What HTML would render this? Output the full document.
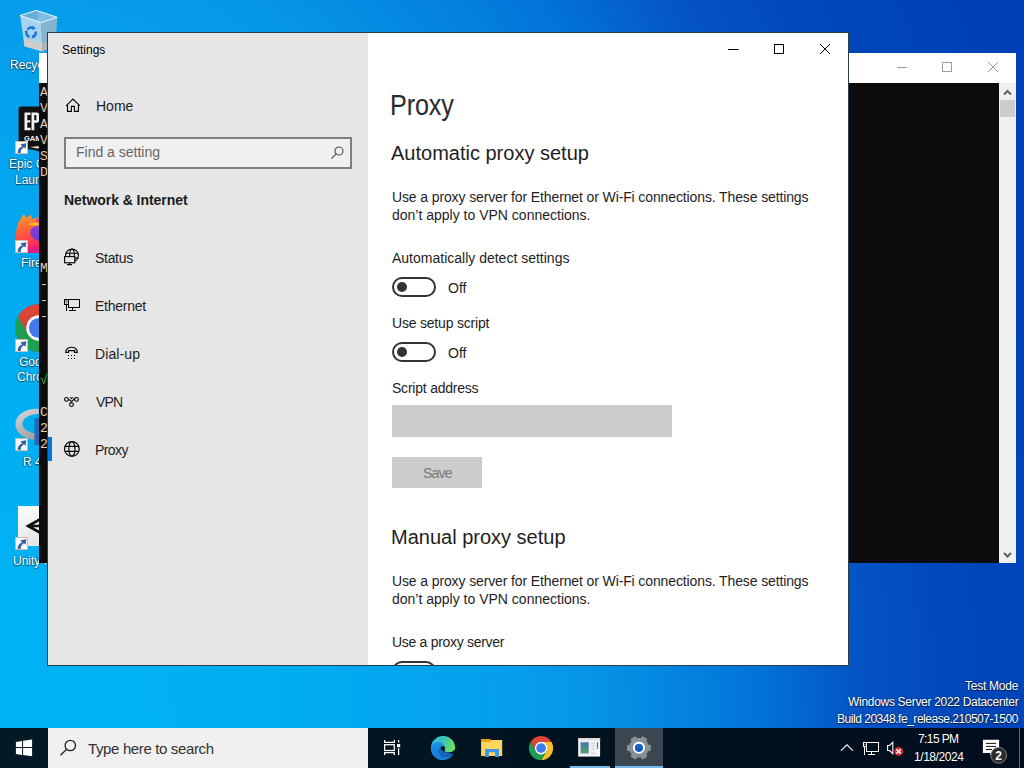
<!DOCTYPE html>
<html><head><meta charset="utf-8">
<style>
*{margin:0;padding:0;box-sizing:border-box}
html,body{width:1024px;height:768px;overflow:hidden}
body{position:relative;font-family:"Liberation Sans",sans-serif;background:#0a6fd6;color:#1e1e1e}
.a{position:absolute}
.t{position:absolute;white-space:nowrap;line-height:1}
#bg{left:0;top:0;width:1024px;height:728px;background:radial-gradient(1100px 1590px at 0px 768px,#00b4f4 0%,#00aef1 25%,#069eec 47%,#0592e6 55%,#0274d8 69%,#0554c6 78%,#0048bc 87%,#0040b6 100%)}
.dl{color:#fff;font-size:12px;text-shadow:0 0 2px rgba(0,0,0,.6),0 1px 1px rgba(0,0,0,.5)}
/* console */
#con{left:39px;top:53px;width:977px;height:510px;background:#fff}
#conblk{left:39px;top:83px;width:960px;height:480px;background:#0c0c0c}
#consb{left:999px;top:83px;width:17px;height:480px;background:#f0f0f0}
.ct{position:absolute;left:40px;color:#e2cdb2;font-family:"Liberation Mono",monospace;font-size:13px;line-height:16px}
/* settings window */
#win{left:47px;top:32px;width:802px;height:634px;border:1px solid #2b3d48;background:#fff}
#side{left:48px;top:33px;width:320px;height:632px;background:#e6e6e6}
#cont{left:368px;top:33px;width:480px;height:632px;background:#fff}
.k{color:#000}
/* taskbar */
#tb{left:0;top:728px;width:1024px;height:40px;background:linear-gradient(90deg,#031a26,#021622 35%,#01111f 65%,#010d1e)}
</style></head><body>
<div class="a" id="bg"></div>

<!-- desktop icons -->
<svg class="a" style="left:20px;top:10px" width="40" height="42" viewBox="0 0 40 42">
<defs><linearGradient id="rb1" x1="0" y1="0" x2="1" y2="0"><stop offset="0" stop-color="#6aaed8"/><stop offset="0.45" stop-color="#6aaed8"/><stop offset="0.5" stop-color="#7cc0e8"/><stop offset="1" stop-color="#7cc0e8"/></linearGradient></defs>
<path d="M0.1 5.5L16.4 0.4L37.2 7.3L21.3 12.6Z" fill="url(#rb1)"/>
<path d="M0.1 5.5L21.3 12.6L22.4 41.4L4.5 36.3Z" fill="#a8d3ee"/>
<path d="M21.3 12.6L37.2 7.3L35.5 36L22.4 41.4Z" fill="#86b4d0"/>
<path d="M3.8 28.3L22.2 33.2L22.4 41.4L4.5 36.3Z" fill="#cdcdcd"/>
<path d="M22.2 33.2L35.8 29L35.5 36L22.4 41.4Z" fill="#b2b2b2"/>
<path d="M0.1 5.5L16.4 0.4L37.2 7.3L21.3 12.6Z" fill="none" stroke="#eef8ff" stroke-width="1" stroke-linejoin="round"/>
<g fill="none" stroke="#1f78d6" stroke-width="2.6"><path d="M7.5 19.5A5 5 0 0 1 13.5 18"/><path d="M15.6 21.5A5 5 0 0 1 13 27"/><path d="M9.5 27A5 5 0 0 1 6.4 22.5"/></g>
<g fill="#1f78d6"><path d="M12.5 15.5L16 18.5L12 20Z"/><path d="M15.5 27L11.5 28.5L12.5 24.5Z"/><path d="M4.5 21L8 20.5L6.5 24.5Z"/></g></svg>
<div class="t dl" style="left:10px;top:59px">Recycle Bin</div>

<svg class="a" style="left:18px;top:106px" width="30" height="50" viewBox="0 0 30 50">
<path d="M0.6 3C0.6 1.5 1.5 0.4 3 0.4H30V48L16 44L0.6 42Z" fill="#111"/>
<path d="M6.5 6.5H12.5V9H9.3V14.2H12.2V16.6H9.3V21.8H12.6V24.3H6.5Z" fill="#f2f2f2"/>
<path d="M13.5 6.5H18.5C20.5 6.5 21.2 7.5 21.2 9.5V13.8C21.2 15.8 20.5 16.8 18.5 16.8H16.3V24.3H13.5ZM16.3 9V14.3H17.6C18.2 14.3 18.4 14 18.4 13.4V9.9C18.4 9.3 18.2 9 17.6 9Z" fill="#f2f2f2"/>
<text x="6" y="35" font-family="Liberation Sans" font-weight="bold" font-size="7.5" fill="#f2f2f2">GAMES</text>
<path d="M12 41L19 42.5L26 41L19 40.2Z" fill="#e8e8e8"/></svg>
<div class="t dl" style="left:9px;top:158px">Epic Games</div>
<div class="t dl" style="left:15px;top:174px">Launcher</div>

<svg class="a" style="left:16px;top:211px" width="32" height="42" viewBox="0 0 32 42">
<defs><linearGradient id="ff1" x1="0" y1="0" x2="0.2" y2="1"><stop offset="0" stop-color="#ffa52a"/><stop offset="0.4" stop-color="#ff6a36"/><stop offset="0.8" stop-color="#ff3750"/><stop offset="1" stop-color="#e01a86"/></linearGradient>
<linearGradient id="ff2" x1="0" y1="0" x2="0.3" y2="1"><stop offset="0" stop-color="#b53ad6"/><stop offset="1" stop-color="#5a3fd6"/></linearGradient>
<clipPath id="ffc"><path d="M8 2.5L10 7L14.8 3.8L16 8C19 7 21 6.6 23 6.4L32 6.4V42H0V21C1 14 4 7 8 2.5Z"/></clipPath></defs>
<g clip-path="url(#ffc)"><circle cx="21" cy="21.5" r="19.5" fill="url(#ff1)"/><rect x="21" y="4" width="12" height="14" fill="url(#ff1)"/></g>
<circle cx="25" cy="19" r="11.3" fill="url(#ff2)"/>
<path d="M8 2.5L10 7L14.8 3.8L16 8C20 9 24 11 27 14C22 14 17.5 15 15 18C13.3 22 14.3 26 17.5 28.5C21 31 27 31.5 32 30V42H0V15Z" fill="url(#ff1)" clip-path="url(#ffc)"/>
<path d="M12 13.2C16 11.6 22 11.6 28 13.6C22 15 16 14.8 12 13.2Z" fill="#ffc21a"/></svg>
<div class="t dl" style="left:21px;top:257px">Firefox</div>

<svg class="a" style="left:15.4px;top:304px" width="48" height="48" viewBox="0 0 48 48"><path d="M24.00 11.50L44.49 11.50A24 24 0 0 0 2.93 12.51L13.17 30.25Z" fill="#db4437"/><path d="M34.83 30.25L24.58 47.99A24 24 0 0 0 44.49 11.50L24.00 11.50Z" fill="#f6c026"/><path d="M13.17 30.25L2.93 12.51A24 24 0 0 0 24.58 47.99L34.83 30.25Z" fill="#1e9e50"/><circle cx="24" cy="24" r="12.7" fill="#fff"/><circle cx="24" cy="24" r="10.1" fill="#3d7cf0"/></svg>
<div class="t dl" style="left:19px;top:356px">Google</div>
<div class="t dl" style="left:17px;top:371px">Chrome</div>

<svg class="a" style="left:15px;top:407px" width="33" height="40" viewBox="0 0 33 40">
<defs><linearGradient id="rg" x1="0" y1="0" x2="0.6" y2="1"><stop offset="0" stop-color="#d8d8da"/><stop offset="1" stop-color="#9a9ba0"/></linearGradient></defs>
<ellipse cx="21" cy="17.3" rx="20.6" ry="15.6" fill="url(#rg)"/><ellipse cx="24" cy="16.8" rx="16.5" ry="9.8" fill="#00adf1"/>
<rect x="19.5" y="11" width="13.5" height="27" fill="#2b65b8"/></svg>
<div class="t dl" style="left:23px;top:456px">R 4.3.2</div>

<div class="a" style="left:18px;top:506px;width:30px;height:40px;background:linear-gradient(160deg,#fff,#e0e0e0)"></div>
<svg class="a" style="left:24px;top:513px" width="24" height="26" viewBox="0 0 24 26"><path d="M22 3L4 13L22 23M4 13H24" stroke="#111" stroke-width="2.6" fill="none" stroke-linejoin="miter"/></svg>
<div class="t dl" style="left:13px;top:555px">Unity Hub</div>

<!-- shortcut arrows -->
<svg width="0" height="0" style="position:absolute"><defs><g id="sc"><rect x="0.5" y="0.5" width="12" height="12" fill="#f8f8f8" stroke="#c8bcb4" stroke-width="1"/><path d="M2.8 12C2.6 8.5 4.2 6.3 7 5.4L5.6 3.3L11.3 2.2L10.6 7.8L9 6.3C7 7.2 5.6 9.2 5.6 12Z" fill="#3262a8"/></g></defs></svg>
<svg class="a" style="left:15px;top:141px" width="13" height="13"><use href="#sc"/></svg>
<svg class="a" style="left:15px;top:240px" width="13" height="13"><use href="#sc"/></svg>
<svg class="a" style="left:15px;top:339px" width="13" height="13"><use href="#sc"/></svg>
<svg class="a" style="left:15px;top:438px" width="13" height="13"><use href="#sc"/></svg>
<svg class="a" style="left:15px;top:537px" width="13" height="13"><use href="#sc"/></svg>

<!-- console window -->
<div class="a" id="con"></div>
<div class="a" id="conblk"></div>
<div class="a" id="consb"></div>
<svg class="a" style="left:890px;top:55px" width="120" height="25" viewBox="0 0 120 25" fill="none" stroke="#9a9a9a" stroke-width="1">
<path d="M7 12.5H17"/><rect x="52.5" y="7.5" width="9" height="9"/><path d="M98 7L108 17M108 7L98 17"/></svg>
<div class="a" style="left:1000px;top:100px;width:15px;height:17px;background:#cdcdcd"></div>
<svg class="a" style="left:1000px;top:86px" width="15" height="477" viewBox="0 0 15 477" fill="none" stroke="#606060" stroke-width="2">
<path d="M4 8.5L7.5 5L11 8.5"/><path d="M4 467L7.5 470.5L11 467"/></svg>
<div class="ct" style="top:84.5px">A<br>V<br>A<br>V<br>S<br>D<br><br><br><br><br><br>M<br>-<br>-<br>-<br><br><br><br><span style="color:#22c422">&#x221A;</span><br><br>C<br>2<br>2</div>

<!-- settings window -->
<div class="a" id="win"></div>
<div class="a" id="side"></div>

<!-- settings title -->
<div class="t" id="tSettings" style="left:62px;top:43.8px;font-size:12px;color:#000">Settings</div>
<svg class="a" style="left:728px;top:44px" width="103" height="11" viewBox="0 0 103 11">
<path d="M0 5.5H10.5" stroke="#000" stroke-width="1"/>
<rect x="46.5" y="0.5" width="9" height="9" fill="none" stroke="#000" stroke-width="1"/>
<path d="M92 0L102 10M102 0L92 10" stroke="#000" stroke-width="1"/>
</svg>
<!-- sidebar -->
<svg class="a" style="left:62px;top:96px" width="22" height="18" viewBox="0 0 22 18"><path d="M4.1 9.9L10.9 3.1L17.9 9.9M5.5 8.9V15.4H9.4V10.4H12.4V15.4H16.4V8.9" fill="none" stroke="#000" stroke-width="1.1"/></svg>
<div class="t" id="tHome" style="left:96px;top:99px;font-size:14px">Home</div>
<div class="a" style="left:64px;top:137px;width:288px;height:32px;border:2px solid #7f7f7f;background:#f0f0f0"></div>
<div class="t" id="tFind" style="left:76px;top:145px;font-size:14px;color:#666">Find a setting</div>
<svg class="a" style="left:328px;top:144px" width="18" height="18" viewBox="0 0 18 18"><circle cx="11" cy="7" r="4" fill="none" stroke="#555" stroke-width="1.2"/><path d="M8.2 9.8L3.5 14.5" stroke="#555" stroke-width="1.2"/></svg>
<div class="t" id="tNet" style="left:64px;top:192.5px;font-size:14px;font-weight:bold;letter-spacing:-0.05px;color:#1c1c1c">Network &amp; Internet</div>
<div class="t" id="tStatus" style="left:95px;top:251px;font-size:14px;letter-spacing:-0.3px">Status</div>
<div class="t" id="tEth" style="left:95px;top:299px;font-size:14px;letter-spacing:-0.25px">Ethernet</div>
<div class="t" id="tDial" style="left:95px;top:347px;font-size:14px;letter-spacing:0.1px">Dial-up</div>
<div class="t" id="tVpn" style="left:96px;top:395px;font-size:14px;letter-spacing:-0.8px">VPN</div>
<div class="t" id="tProxy" style="left:95px;top:443px;font-size:14px;letter-spacing:-0.6px">Proxy</div>
<div class="a" style="left:48px;top:437px;width:4px;height:24px;background:#0078d7"></div>
<svg class="a" style="left:62px;top:246px" width="20" height="22" viewBox="0 0 20 22" fill="none" stroke="#000" stroke-width="1.1">
<circle cx="10" cy="9.5" r="6.4"/><ellipse cx="10" cy="9.5" rx="2.3" ry="6.4"/><path d="M3.6 7.3H16.4M3.6 12.1H16.4"/>
<rect x="2.6" y="10.6" width="10.2" height="6.2" fill="#e6e6e6"/><path d="M7.7 16.8V18.6M5 18.6H10"/></svg>
<svg class="a" style="left:62px;top:296px" width="20" height="18" viewBox="0 0 20 18" fill="none" stroke="#000" stroke-width="1.1">
<rect x="2.5" y="3.5" width="4" height="5" stroke-width="1"/><path d="M3.4 4.9H5.6M3.4 6L4.5 7L5.6 6" stroke-width="0.7"/><rect x="6.5" y="3.5" width="11" height="8" stroke-width="1"/><path d="M4.5 8.5V15M10.5 11.5V14.5M7 14.5H14" stroke-width="1"/></svg>
<svg class="a" style="left:62px;top:344px" width="20" height="18" viewBox="0 0 20 18" fill="none" stroke="#000" stroke-width="1.1">
<path d="M3.7 8.4C3.3 4.6 7 3.3 9.5 3.3C12 3.3 15.7 4.6 15.3 8.4H12.6V6.6H6.4V8.4Z"/>
<g fill="#000" stroke="none"><rect x="6" y="11" width="1" height="1"/><rect x="9" y="11" width="1" height="1"/><rect x="12" y="11" width="1" height="1"/><rect x="6" y="14" width="1" height="1"/><rect x="9" y="14" width="1" height="1"/><rect x="12" y="14" width="1" height="1"/></g></svg>
<svg class="a" style="left:62px;top:392px" width="20" height="18" viewBox="0 0 20 18" fill="none" stroke="#000" stroke-width="1.1">
<circle cx="4.5" cy="7.4" r="1.9"/><circle cx="14.5" cy="7.4" r="1.9"/><circle cx="9.5" cy="12.6" r="1.9"/>
<path d="M6.4 7.6L9.2 8.8M13 6.2L8.2 11.2M8.2 5.4L9.5 6.6L10.8 5.4"/></svg>
<svg class="a" style="left:62px;top:438px" width="20" height="22" viewBox="0 0 20 22" fill="none" stroke="#000" stroke-width="1.15">
<circle cx="9.9" cy="10.9" r="7.35"/><ellipse cx="9.9" cy="10.9" rx="3.1" ry="7.35"/><path d="M2.8 8.3H17M2.8 13.4H17"/></svg>
<!-- content -->
<div class="t" id="tH1" style="left:390px;top:90.5px;font-size:29px;color:#2a2a2a;letter-spacing:-0.2px;transform:scaleX(0.87);transform-origin:0 0">Proxy</div>
<div class="t" id="tAuto" style="left:391px;top:142.6px;font-size:20px">Automatic proxy setup</div>
<div class="t" id="tP1" style="left:392px;top:190.1px;font-size:14px;letter-spacing:-0.12px">Use a proxy server for Ethernet or Wi-Fi connections. These settings</div>
<div class="t" id="tP2" style="left:392px;top:208.1px;font-size:14px">don’t apply to VPN connections.</div>
<div class="t" id="tAds" style="left:392px;top:251.1px;font-size:14px">Automatically detect settings</div>
<div class="a" style="left:392px;top:277px;width:44px;height:20px;border:2px solid #333;border-radius:10px"></div>
<div class="a" style="left:397px;top:282px;width:10px;height:10px;border-radius:50%;background:#333"></div>
<div class="t" id="tOff1" style="left:448px;top:280.5px;font-size:14px">Off</div>
<div class="t" id="tUss" style="left:392px;top:316.1px;font-size:14px;letter-spacing:-0.2px">Use setup script</div>
<div class="a" style="left:392px;top:342px;width:44px;height:20px;border:2px solid #333;border-radius:10px"></div>
<div class="a" style="left:397px;top:347px;width:10px;height:10px;border-radius:50%;background:#333"></div>
<div class="t" id="tOff2" style="left:448px;top:345.7px;font-size:14px">Off</div>
<div class="t" id="tSa" style="left:392px;top:380.9px;font-size:14px;letter-spacing:-0.22px">Script address</div>
<div class="a" style="left:392px;top:405px;width:280px;height:32px;background:#cccccc"></div>
<div class="a" style="left:392px;top:457px;width:90px;height:31px;background:#cccccc"></div>
<div class="t" id="tSave" style="left:423px;top:465.8px;font-size:14px;color:#7a7a7a;letter-spacing:-0.8px">Save</div>
<div class="t" id="tMan" style="left:391px;top:526.8px;font-size:20px">Manual proxy setup</div>
<div class="t" id="tP3" style="left:392px;top:574.1px;font-size:14px;letter-spacing:-0.12px">Use a proxy server for Ethernet or Wi-Fi connections. These settings</div>
<div class="t" id="tP4" style="left:392px;top:592.1px;font-size:14px">don’t apply to VPN connections.</div>
<div class="t" id="tUps" style="left:392px;top:634.6px;font-size:14px;letter-spacing:-0.3px">Use a proxy server</div>
<div class="a" style="left:368px;top:600px;width:480px;height:65px;overflow:hidden"><div class="a" style="left:24px;top:61px;width:44px;height:20px;border:2px solid #333;border-radius:10px"></div></div>

<!-- desktop watermark -->
<div class="t dl" id="tTM" style="left:965px;top:680.3px;letter-spacing:-0.25px">Test Mode</div>
<div class="t dl" id="tWS" style="left:848px;top:695.6px;letter-spacing:-0.3px">Windows Server 2022 Datacenter</div>
<div class="t dl" id="tBld" style="left:837px;top:713.2px;letter-spacing:-0.47px">Build 20348.fe_release.210507-1500</div>

<!-- taskbar -->
<div class="a" id="tb"></div>
<div class="a" style="left:48px;top:728px;width:320px;height:40px;background:#f0f0f0"></div>
<div class="t" id="tType" style="left:88px;top:741.3px;font-size:15px;color:#333;letter-spacing:-0.36px">Type here to search</div>
<div class="a" style="left:615px;top:728px;width:48px;height:40px;background:#3a4650"></div>
<div class="a" style="left:570px;top:766px;width:40px;height:2px;background:#76b9ed"></div>
<div class="a" style="left:615px;top:766px;width:48px;height:2px;background:#76b9ed"></div>
<svg class="a" style="left:12px;top:736px" width="24" height="24" viewBox="0 0 24 24" fill="#fff">
<path d="M3.9 5.9L10.1 4.9V10.9H3.9Z"/><path d="M11.1 4.7L20.1 3.6V10.9H11.1Z"/><path d="M3.9 12H10.1V19L3.9 18.1Z"/><path d="M11.1 12H20.1V20.2L11.1 19.1Z"/></svg>
<svg class="a" style="left:56px;top:736px" width="24" height="24" viewBox="0 0 24 24" fill="none" stroke="#222" stroke-width="1.3">
<circle cx="14.3" cy="9.5" r="5.2"/><path d="M10.6 13.2L4.5 19.3"/></svg>
<svg class="a" style="left:380px;top:736px" width="24" height="24" viewBox="0 0 24 24" fill="none" stroke="#fff" stroke-width="1.25">
<path d="M4.6 3.9V6.4H14.3V3.9"/><rect x="4.6" y="8.7" width="9.7" height="5.8"/><path d="M4.6 19.1V16.7H14.3V19.1"/><path d="M18.6 4V6.6M18.6 12.3V19"/><rect x="17" y="8" width="3.2" height="3.2" fill="#fff" stroke="none"/></svg>
<svg class="a" style="left:431px;top:736px" width="25" height="25" viewBox="0 0 25 25">
<defs><linearGradient id="eg1" x1="0" y1="0" x2="1" y2="0.4"><stop offset="0" stop-color="#32b8f0"/><stop offset="0.5" stop-color="#36c3b8"/><stop offset="1" stop-color="#72e35a"/></linearGradient>
<linearGradient id="eg2" x1="0" y1="0" x2="0.4" y2="1"><stop offset="0" stop-color="#1d92e6"/><stop offset="1" stop-color="#1478d6"/></linearGradient></defs>
<circle cx="12.1" cy="12" r="12.1" fill="url(#eg1)"/>
<path d="M24.4 12.2C23.2 15.9 18.4 17.2 13.8 15.4L12 25H25V12Z" fill="#021520"/>
<path d="M0 12C0 9.5 2 7 5.5 6.2C9 5.6 12.5 7.2 13.8 10.8C12.6 9.9 10.5 10 9.4 11.8C8 14.5 9.5 18.2 13.5 19C16.5 19.6 20 19 22.3 17.8C20.3 21.8 16.5 24.1 12 24.1C5.4 24.1 0 18.6 0 12Z" fill="url(#eg2)"/>
<path d="M9.4 11.8C8 14.5 9.5 18.2 13.5 19C16.5 19.6 20 19 22.3 17.8C21.5 19.3 19 20.6 16 21C11.5 21.5 8 19 7.7 15.5C7.6 14 8.2 12.6 9.4 11.8Z" fill="#145fb2"/>
<path d="M9.4 11.8C10 13 11.5 14.6 13.8 15.4C17 16.6 20 17.3 22.3 17.8C20 19 16.5 19.6 13.5 19C9.5 18.2 8 14.5 9.4 11.8Z" fill="#1562b8"/><path d="M9.4 11.8C10.5 10 12.6 9.9 13.8 10.8C14.2 12.2 13.8 14.2 13.8 15.4C12 14.8 10.8 14.2 10.2 13.2C9.8 12.6 9.5 12.2 9.4 11.8Z" fill="#021520"/></svg>
<svg class="a" style="left:476px;top:734px" width="30" height="28" viewBox="0 0 30 28">
<path d="M5.1 5.1H14L15 6H26.2V22H5.1Z" fill="#ffd460"/><path d="M5.1 5.1H14L15.2 6.4L14 7.8H5.1Z" fill="#e5a200"/>
<path d="M9.1 23V16C9.1 15.4 9.5 15 10.1 15H22C22.6 15 23 15.4 23 16V23H19.1V18.2H12.9V23Z" fill="#3b9ae6"/></svg>
<svg class="a" style="left:529px;top:736px" width="24.2" height="24.2" viewBox="0 0 24.2 24.2"><path d="M12.10 6.00L22.55 6.00A12.1 12.1 0 0 0 1.59 6.10L6.82 15.15Z" fill="#db4437"/><path d="M17.38 15.15L12.16 24.20A12.1 12.1 0 0 0 22.55 6.00L12.10 6.00Z" fill="#f6c026"/><path d="M6.82 15.15L1.59 6.10A12.1 12.1 0 0 0 12.16 24.20L17.38 15.15Z" fill="#1e9e50"/><circle cx="12.1" cy="12.1" r="6.3" fill="#fff"/><circle cx="12.1" cy="12.1" r="4.9" fill="#3d7cf0"/></svg>
<svg class="a" style="left:574px;top:734px" width="30" height="28" viewBox="0 0 30 28">
<defs><linearGradient id="ag" x1="0" y1="0" x2="0" y2="1"><stop offset="0" stop-color="#3f74b8"/><stop offset="1" stop-color="#4aaa58"/></linearGradient></defs>
<rect x="4.2" y="4.2" width="21.9" height="18.4" fill="#f5f5f5"/><rect x="4.2" y="4.2" width="21.9" height="2.4" fill="#e2e2e2"/>
<rect x="6.7" y="8.2" width="8.1" height="11.1" fill="url(#ag)" stroke="#a0a0c0" stroke-width="0.5"/>
<g fill="#d6d6d6"><rect x="17" y="8.4" width="4" height="1.6"/><rect x="17" y="11.3" width="4" height="1.6"/><rect x="17" y="14.3" width="4" height="1.6"/><rect x="17" y="18.7" width="4" height="1.4"/></g>
<rect x="22.8" y="8.2" width="1.3" height="6.6" fill="url(#ag)"/></svg>
<svg class="a" style="left:624px;top:734px" width="30" height="28" viewBox="0 0 30 28">
<defs><linearGradient id="gg" gradientUnits="userSpaceOnUse" x1="0" y1="-12" x2="0" y2="12"><stop offset="0" stop-color="#9a9fa6"/><stop offset="1" stop-color="#7a8189"/></linearGradient>
<linearGradient id="gb" x1="0" y1="0" x2="0" y2="1"><stop offset="0" stop-color="#1a6fd0"/><stop offset="1" stop-color="#0c4fa6"/></linearGradient></defs>
<g transform="translate(14.95 13.85)">
<g fill="url(#gg)"><circle r="9.9"/>
<path id="tooth" d="M7 -3.1H10.9Q11.9 -3.1 11.9 -2.1V2.1Q11.9 3.1 10.9 3.1H7Z"/>
<path d="M7 -3.1H10.9Q11.9 -3.1 11.9 -2.1V2.1Q11.9 3.1 10.9 3.1H7Z" transform="rotate(60)"/><path d="M7 -3.1H10.9Q11.9 -3.1 11.9 -2.1V2.1Q11.9 3.1 10.9 3.1H7Z" transform="rotate(120)"/><path d="M7 -3.1H10.9Q11.9 -3.1 11.9 -2.1V2.1Q11.9 3.1 10.9 3.1H7Z" transform="rotate(180)"/><path d="M7 -3.1H10.9Q11.9 -3.1 11.9 -2.1V2.1Q11.9 3.1 10.9 3.1H7Z" transform="rotate(240)"/><path d="M7 -3.1H10.9Q11.9 -3.1 11.9 -2.1V2.1Q11.9 3.1 10.9 3.1H7Z" transform="rotate(300)"/></g>
<circle r="6" fill="#fff"/><circle r="4.1" fill="url(#gb)"/></g></svg>
<svg class="a" style="left:838px;top:738px" width="66" height="22" viewBox="0 0 66 22" fill="none" stroke="#fff" stroke-width="1.1">
<path d="M2.9 12.6L9 6.8L14.8 12.6"/>
<g stroke-width="1"><rect x="25.5" y="4.5" width="3" height="4"/><path d="M26.5 6.2L27 6.8L27.5 6.2" stroke-width="0.8"/><rect x="28.5" y="4.5" width="12" height="9"/><path d="M26.5 8.5V17M33.5 13.5V16.5M30 16.5H37"/></g>
<path d="M49.6 7.5H51.6L54.8 4.4V15.6L51.6 12.5H49.6Z"/>
<circle cx="60.6" cy="13.4" r="4.4" fill="#e32b2b" stroke="none"/><path d="M58.4 11.2L62.8 15.6M62.8 11.2L58.4 15.6" stroke-width="1.4"/></svg>
<svg class="a" style="left:978px;top:734px" width="46" height="34" viewBox="0 0 46 34">
<path d="M4.9 5.8H21.1V18.9H14L12.1 21.6V18.9H4.9Z" fill="#fff"/>
<path d="M8 9.4H18M8 12.4H18M8 15.5H14" stroke="#111" stroke-width="1"/>
<circle cx="20.7" cy="21.3" r="7.9" fill="#2b2b2b" stroke="#8a8a8a" stroke-width="0.9"/>
<text x="20.7" y="25.6" text-anchor="middle" font-family="Liberation Sans" font-weight="bold" font-size="12" fill="#fff">2</text>
</svg>
<div class="a" style="left:1019px;top:728px;width:1px;height:40px;background:#5d646b"></div>
<div class="t" id="tTime" style="left:918px;top:733.2px;font-size:12px;color:#fff;letter-spacing:-0.6px">7:15 PM</div>
<div class="t" id="tDate" style="left:914px;top:750.5px;font-size:12px;color:#fff;letter-spacing:-0.44px">1/18/2024</div>

</body></html>
